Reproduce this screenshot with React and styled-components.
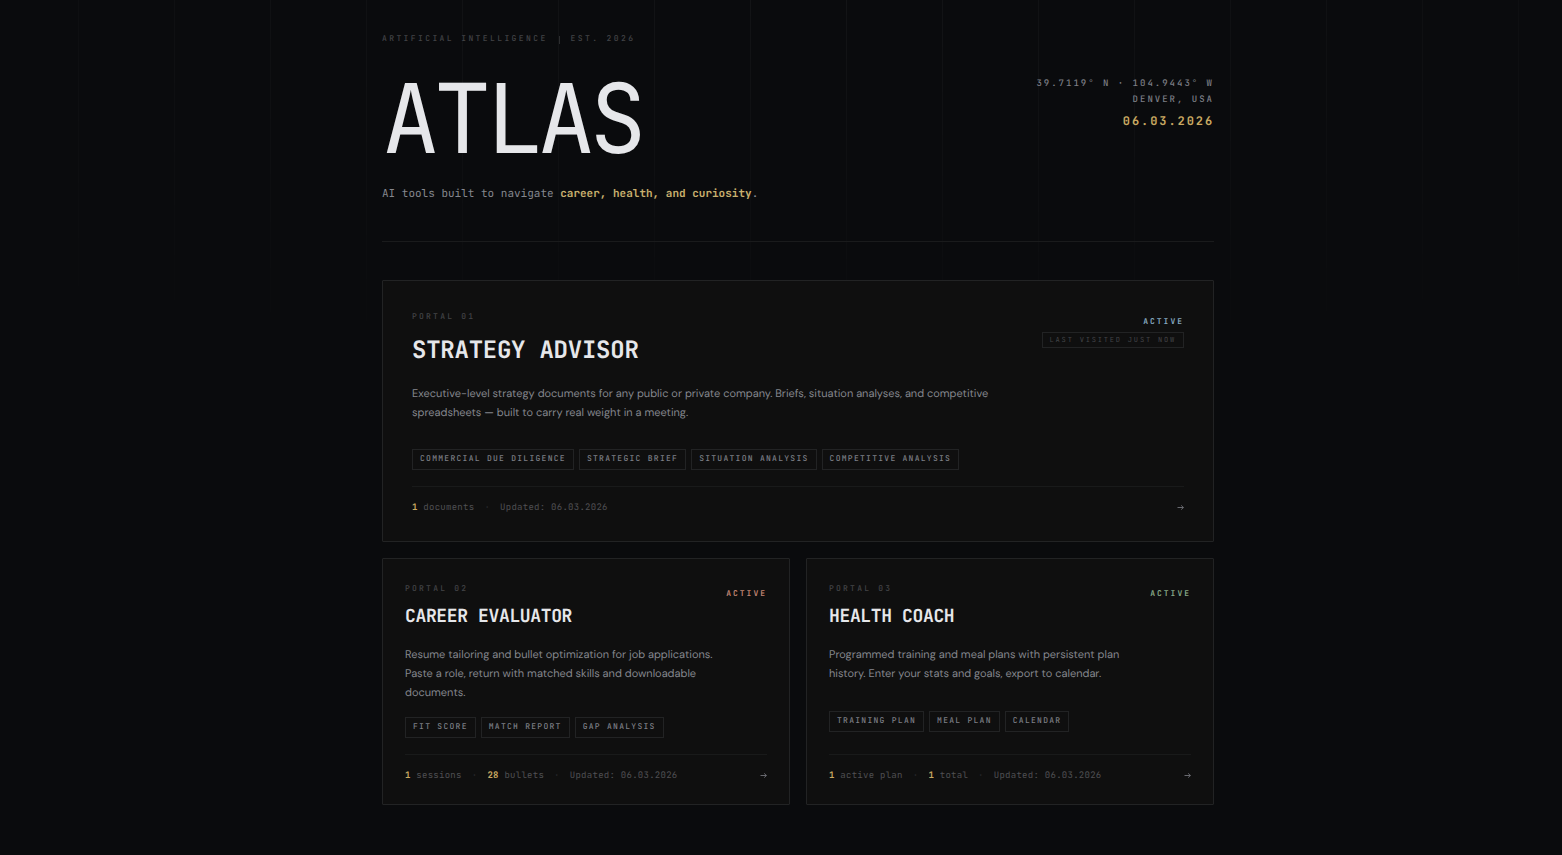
import React from "react";
import styled, { createGlobalStyle } from "styled-components";

const mono = `"JetBrains Mono", "DejaVu Sans Mono", "Liberation Mono", monospace`;
const sans = `"DM Sans", Inter, "Liberation Sans", sans-serif`;

const portals = [
  {
    id: "01",
    title: "STRATEGY ADVISOR",
    accent: "#86a9c0",
    visited: "LAST VISITED JUST NOW",
    text: "Executive-level strategy documents for any public or private company. Briefs, situation analyses, and competitive spreadsheets — built to carry real weight in a meeting.",
    tags: [
      "COMMERCIAL DUE DILIGENCE",
      "STRATEGIC BRIEF",
      "SITUATION ANALYSIS",
      "COMPETITIVE ANALYSIS",
    ],
    stats: [{ count: 1, label: "documents" }],
    updated: "06.03.2026",
  },
  {
    id: "02",
    title: "CAREER EVALUATOR",
    accent: "#c08472",
    text: "Resume tailoring and bullet optimization for job applications. Paste a role, return with matched skills and downloadable documents.",
    tags: ["FIT SCORE", "MATCH REPORT", "GAP ANALYSIS"],
    stats: [
      { count: 1, label: "sessions" },
      { count: 28, label: "bullets" },
    ],
    updated: "06.03.2026",
  },
  {
    id: "03",
    title: "HEALTH COACH",
    accent: "#86a886",
    text: "Programmed training and meal plans with persistent plan history. Enter your stats and goals, export to calendar.",
    tags: ["TRAINING PLAN", "MEAL PLAN", "CALENDAR"],
    stats: [
      { count: 1, label: "active plan" },
      { count: 1, label: "total" },
    ],
    updated: "06.03.2026",
  },
];

const Portal = ({ portal, featured }) => {
  return (
    <Card href={`#portal-${portal.id}`} $featured={featured}>
      <CardHead>
        <div>
          <Label>PORTAL {portal.id}</Label>
          <CardTitle $featured={featured}>{portal.title}</CardTitle>
        </div>
        <Status>
          <Active $color={portal.accent}>ACTIVE</Active>
          {portal.visited && <Visited>{portal.visited}</Visited>}
        </Status>
      </CardHead>
      <Description $featured={featured}>{portal.text}</Description>
      <Tags>
        {portal.tags.map((tag) => (
          <Tag key={tag}>{tag}</Tag>
        ))}
      </Tags>
      <CardFoot>
        <Stats>
          {portal.stats.map((stat) => (
            <React.Fragment key={stat.label}>
              <span>
                <strong>{stat.count}</strong> {stat.label}
              </span>
              <Dot>·</Dot>
            </React.Fragment>
          ))}
          <span>Updated: {portal.updated}</span>
        </Stats>
        <Arrow viewBox="0 0 7 7" aria-hidden="true">
          <path d="M0.5 3.5H6.4M4.2 1.4L6.4 3.5L4.2 5.6" />
        </Arrow>
      </CardFoot>
    </Card>
  );
};

const App = () => {
  return (
    <Page>
      <GlobalStyle />
      <Container>
        <Header>
          <Eyebrow>
            <span>ARTIFICIAL INTELLIGENCE</span>
            <Bar />
            <span>EST. 2026</span>
          </Eyebrow>
          <Masthead>
            <Title>ATLAS</Title>
            <Place>
              <div>39.7119° N · 104.9443° W</div>
              <div>DENVER, USA</div>
              <Today>06.03.2026</Today>
            </Place>
          </Masthead>
          <Tagline>
            AI tools built to navigate{" "}
            <strong>career, health, and curiosity</strong>.
          </Tagline>
        </Header>
        <Grid>
          {portals.map((portal, i) => (
            <Portal key={portal.id} portal={portal} featured={i === 0} />
          ))}
        </Grid>
      </Container>
    </Page>
  );
};

const GlobalStyle = createGlobalStyle`
  * {
    box-sizing: border-box;
    margin: 0;
    padding: 0;
  }
  body {
    background: #0a0b0d;
    color: #e6e7ea;
    font-family: ${mono};
    -webkit-font-smoothing: antialiased;
    text-rendering: geometricPrecision;
  }
`;
const Page = styled.div`
  position: relative;
  min-height: 100vh;
  padding: 33px 0 48px 34px;
  /* faint vertical rules that fade out below the header */
  &::before {
    content: "";
    position: absolute;
    inset: 0 0 auto 0;
    height: 400px;
    background: repeating-linear-gradient(
      90deg,
      rgba(255, 255, 255, 0.04) 0 1px,
      transparent 1px 96px
    );
    background-position: 78px 0;
    background-size: 96px 100%;
    mask-image: radial-gradient(ellipse 100% 100% at 51% 0, #000, transparent);
    pointer-events: none;
  }
`;
const Container = styled.main`
  position: relative;
  max-width: 832px;
  margin: 0 auto;
`;
const Header = styled.header`
  padding-bottom: 39px;
  margin-bottom: 38px;
  border-bottom: 1px solid #1a1b1c;
`;
const Eyebrow = styled.div`
  display: flex;
  align-items: center;
  gap: 11px;
  margin-bottom: 26px;
  color: #434447;
  font-size: 8px;
  font-weight: 500;
  line-height: 13px;
  letter-spacing: 0.3em;
`;
const Bar = styled.i`
  width: 1px;
  height: 8px;
  background: #2c2d2f;
`;
const Masthead = styled.div`
  display: flex;
  justify-content: space-between;
  align-items: flex-start;
`;
const Title = styled.h1`
  font-size: 96px;
  font-weight: 400;
  line-height: 94px;
  letter-spacing: -0.06em;
`;
const Place = styled.div`
  padding-top: 3px;
  color: #7d7f86;
  font-size: 9px;
  font-weight: 500;
  line-height: 16px;
  letter-spacing: 2px;
  text-align: right;
`;
const Today = styled.div`
  margin-top: 6px;
  color: #c9a962;
  font-size: 12px;
  font-weight: 600;
  letter-spacing: 0.16em;
`;
const Tagline = styled.p`
  margin-top: 20px;
  color: #85878e;
  font-size: 11px;
  line-height: 16px;
  strong {
    color: #c9b06e;
    font-weight: 600;
  }
`;
const Grid = styled.div`
  display: grid;
  grid-template-columns: 1fr 1fr;
  gap: 16px;
`;
const Card = styled.a`
  display: flex;
  flex-direction: column;
  grid-column: ${(props) => (props.$featured ? "1 / -1" : "auto")};
  padding: ${(props) => (props.$featured ? "30px 29px 28px" : "24px 22px 23px")};
  border: 1px solid #222324;
  border-radius: 1px;
  background: #0f0f0f;
  color: inherit;
  text-decoration: none;
`;
const CardHead = styled.div`
  display: flex;
  justify-content: space-between;
  align-items: flex-start;
`;
const Label = styled.div`
  color: #434447;
  font-size: 8px;
  font-weight: 500;
  line-height: 13px;
  letter-spacing: 0.28em;
`;
const CardTitle = styled.h2`
  margin-top: ${(props) => (props.$featured ? "15px" : "12px")};
  font-size: ${(props) => (props.$featured ? "24px" : "18px")};
  line-height: ${(props) => (props.$featured ? "24px" : "18px")};
  letter-spacing: ${(props) => (props.$featured ? "-0.01em" : "-0.02em")};
  font-weight: 700;
`;
const Status = styled.div`
  display: flex;
  flex-direction: column;
  align-items: flex-end;
  gap: 3px;
  padding-top: 5px;
`;
const Active = styled.span`
  color: ${(props) => props.$color};
  font-size: 8px;
  font-weight: 700;
  line-height: 13px;
  letter-spacing: 0.25em;
`;
const Visited = styled.span`
  padding: 1px 7px 0;
  border: 1px solid #222324;
  color: #434447;
  font-size: 7px;
  line-height: 13px;
  letter-spacing: 0.26em;
`;
const Description = styled.p`
  max-width: ${(props) => (props.$featured ? "600px" : "320px")};
  min-height: ${(props) => (props.$featured ? "50px" : "51px")};
  margin: ${(props) => (props.$featured ? "22px" : "20px")} 0 14px;
  color: #85878e;
  font-family: ${sans};
  font-size: 11px;
  line-height: 19px;
`;
const Tags = styled.div`
  display: flex;
  flex-wrap: wrap;
  gap: 5px;
  margin-bottom: 16px;
`;
const Tag = styled.span`
  padding: 0 7px;
  border: 1px solid #222324;
  color: #7d7f86;
  font-size: 8px;
  font-weight: 500;
  line-height: 19px;
  letter-spacing: 0.16em;
`;
const CardFoot = styled.div`
  display: flex;
  justify-content: space-between;
  align-items: center;
  margin-top: auto;
  padding-top: 15px;
  border-top: 1px solid #191a1a;
`;
const Stats = styled.div`
  display: flex;
  gap: 10px;
  color: #4f5053;
  font-size: 9px;
  line-height: 11px;
  letter-spacing: 0.03em;
  strong {
    color: #c9a962;
    font-weight: 700;
  }
`;
const Dot = styled.span`
  color: #2c2d2f;
`;
const Arrow = styled.svg`
  width: 7px;
  height: 7px;
  fill: none;
  stroke: #7d7f86;
  stroke-width: 0.8;
`;

export default App;
